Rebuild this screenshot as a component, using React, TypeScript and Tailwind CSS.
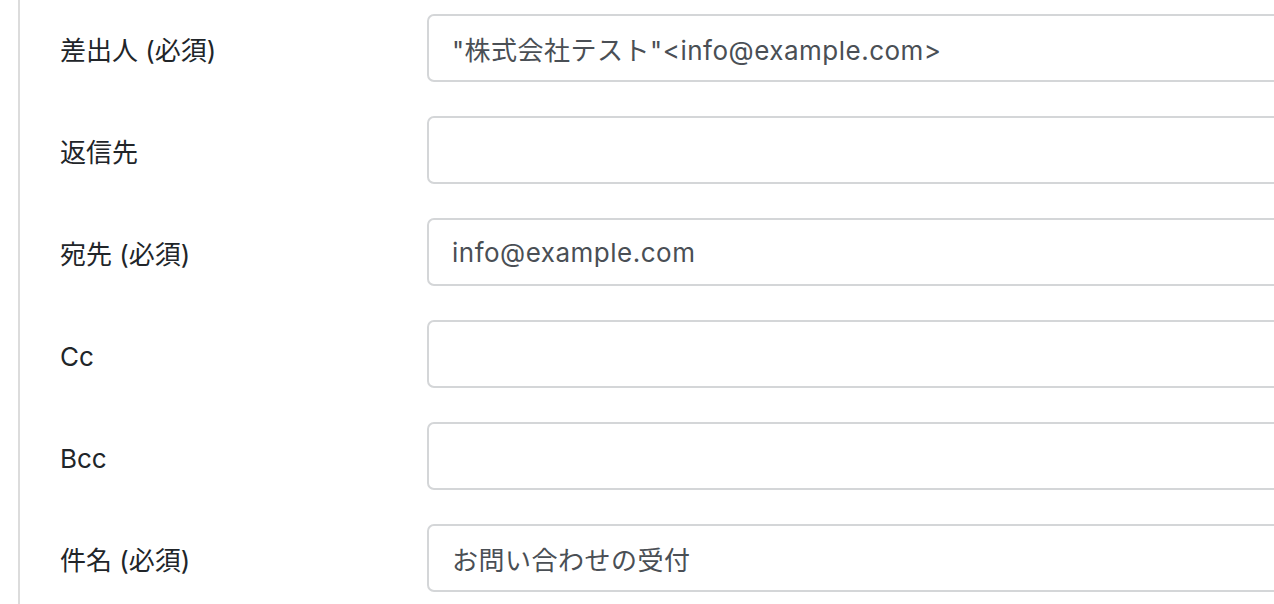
import React from 'react';

type Field = {
  label: string;
  value: string;
};

const fields: Field[] = [
  { label: '差出人 (必須)', value: '"株式会社テスト"<info@example.com>' },
  { label: '返信先', value: '' },
  { label: '宛先 (必須)', value: 'info@example.com' },
  { label: 'Cc', value: '' },
  { label: 'Bcc', value: '' },
  { label: '件名 (必須)', value: 'お問い合わせの受付' },
];

const fontStack = {
  fontFamily: 'Inter, "Noto Sans CJK JP", sans-serif',
};

export default function App() {
  return (
    <div className="h-[604px] w-[1274px] overflow-hidden bg-white" style={fontStack}>
      <div className="ml-[18px] flex h-full flex-col gap-[34px] border-l-2 border-[#dcdcdc] pl-[40px] pt-[14px]">
        {fields.map((f) => (
          <div key={f.label} className="flex h-[68px] items-center">
            <label className="w-[367px] shrink-0 pt-1 text-[26px] text-[#212529]">{f.label}</label>
            <input
              readOnly
              value={f.value}
              className="h-[68px] w-[1000px] shrink-0 rounded-[7px] border-2 border-[#d4d6d8] bg-white px-[23px] text-[26px] tracking-[0.5px] text-[#4a4f55] outline-none"
              style={fontStack}
            />
          </div>
        ))}
      </div>
    </div>
  );
}
